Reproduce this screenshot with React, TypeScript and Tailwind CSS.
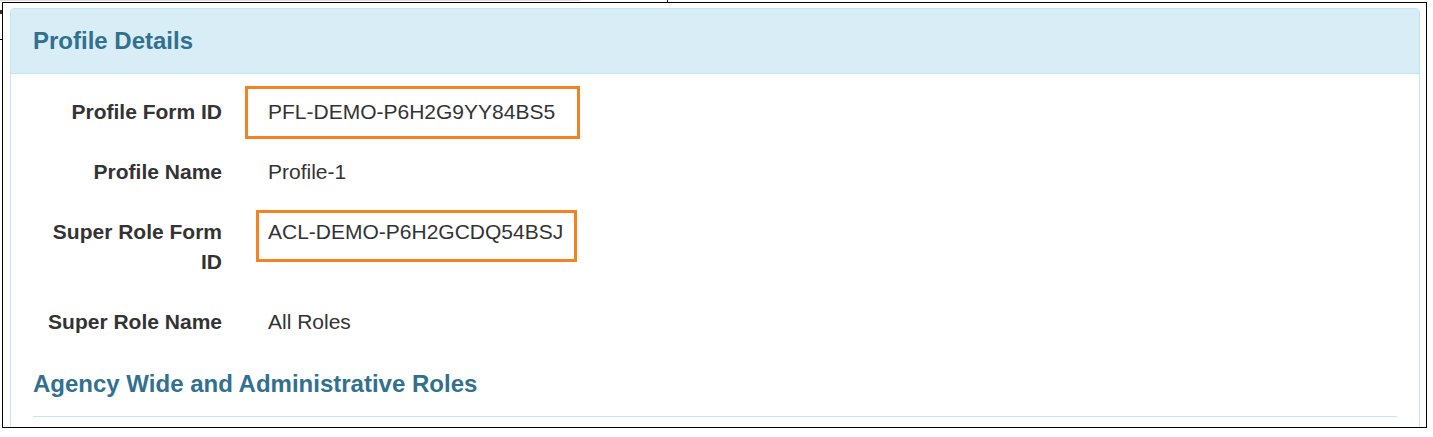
const rows = [
  { label: 'Profile Form ID', value: 'PFL-DEMO-P6H2G9YY84BS5', box: 'wide' },
  { label: 'Profile Name', value: 'Profile-1' },
  { label: 'Super Role Form ID', value: 'ACL-DEMO-P6H2GCDQ54BSJ', box: 'narrow' },
  { label: 'Super Role Name', value: 'All Roles' },
]

function Highlight({ kind }: { kind: string }) {
  // orange annotation frames drawn over the captured values
  if (kind === 'wide') {
    return (
      <span className="pointer-events-none absolute left-[-23px] top-[-11px] h-[53px] w-[335px] border-[3px] border-[#f58220]" />
    )
  }
  return (
    <span className="pointer-events-none absolute left-[-12px] top-[-7px] h-[52px] w-[321px] border-[3px] border-[#f58220]" />
  )
}

export default function App() {
  return (
    <div className="relative h-[437px] w-[1433px] overflow-hidden bg-white font-['Liberation_Sans',Arial,sans-serif] text-[#333]">
      {/* capture leftovers on the edges */}
      <div className="absolute left-0 top-0 h-px w-[580px] bg-[#dcdcdc]" />
      <div className="absolute left-[667px] top-0 h-[3px] w-px bg-black" />
      <div className="absolute left-0 top-[10px] h-[4px] w-[2px] bg-[#333]" />
      <div className="absolute left-0 top-[39px] h-px w-[3px] bg-black" />

      <div className="ml-[2px] mt-[2px] h-[426px] w-[1425px] overflow-hidden border border-black pl-[7px] pr-[6px] pt-[5px]">
        <section className="rounded-t-[4px] border border-[#bce8f1] bg-white">
          <div className="flex h-[65px] items-center rounded-t-[3px] border-b border-[#bce8f1] bg-[#d9edf7] px-[22px]">
            <h3 className="text-[24px] font-bold leading-[1.1] text-[#31708f]">Profile Details</h3>
          </div>

          <div className="px-[22px] pt-[23px] pb-[40px]">
            <div className="flex flex-col gap-[30px] text-[21px] leading-[30px]">
              {rows.map((row) => (
                <div key={row.label} className="flex">
                  <div className="w-[189px] shrink-0 text-right font-bold">{row.label}</div>
                  <div className="relative ml-[46px]">
                    {row.box && <Highlight kind={row.box} />}
                    <span>{row.value}</span>
                  </div>
                </div>
              ))}
            </div>

            <h3 className="mt-[34px] text-[24px] font-bold leading-[1.1] text-[#31708f]">
              Agency Wide and Administrative Roles
            </h3>
            <hr className="mt-[19px] border-0 border-t border-[#bce8f1]" />
          </div>
        </section>
      </div>
    </div>
  )
}
